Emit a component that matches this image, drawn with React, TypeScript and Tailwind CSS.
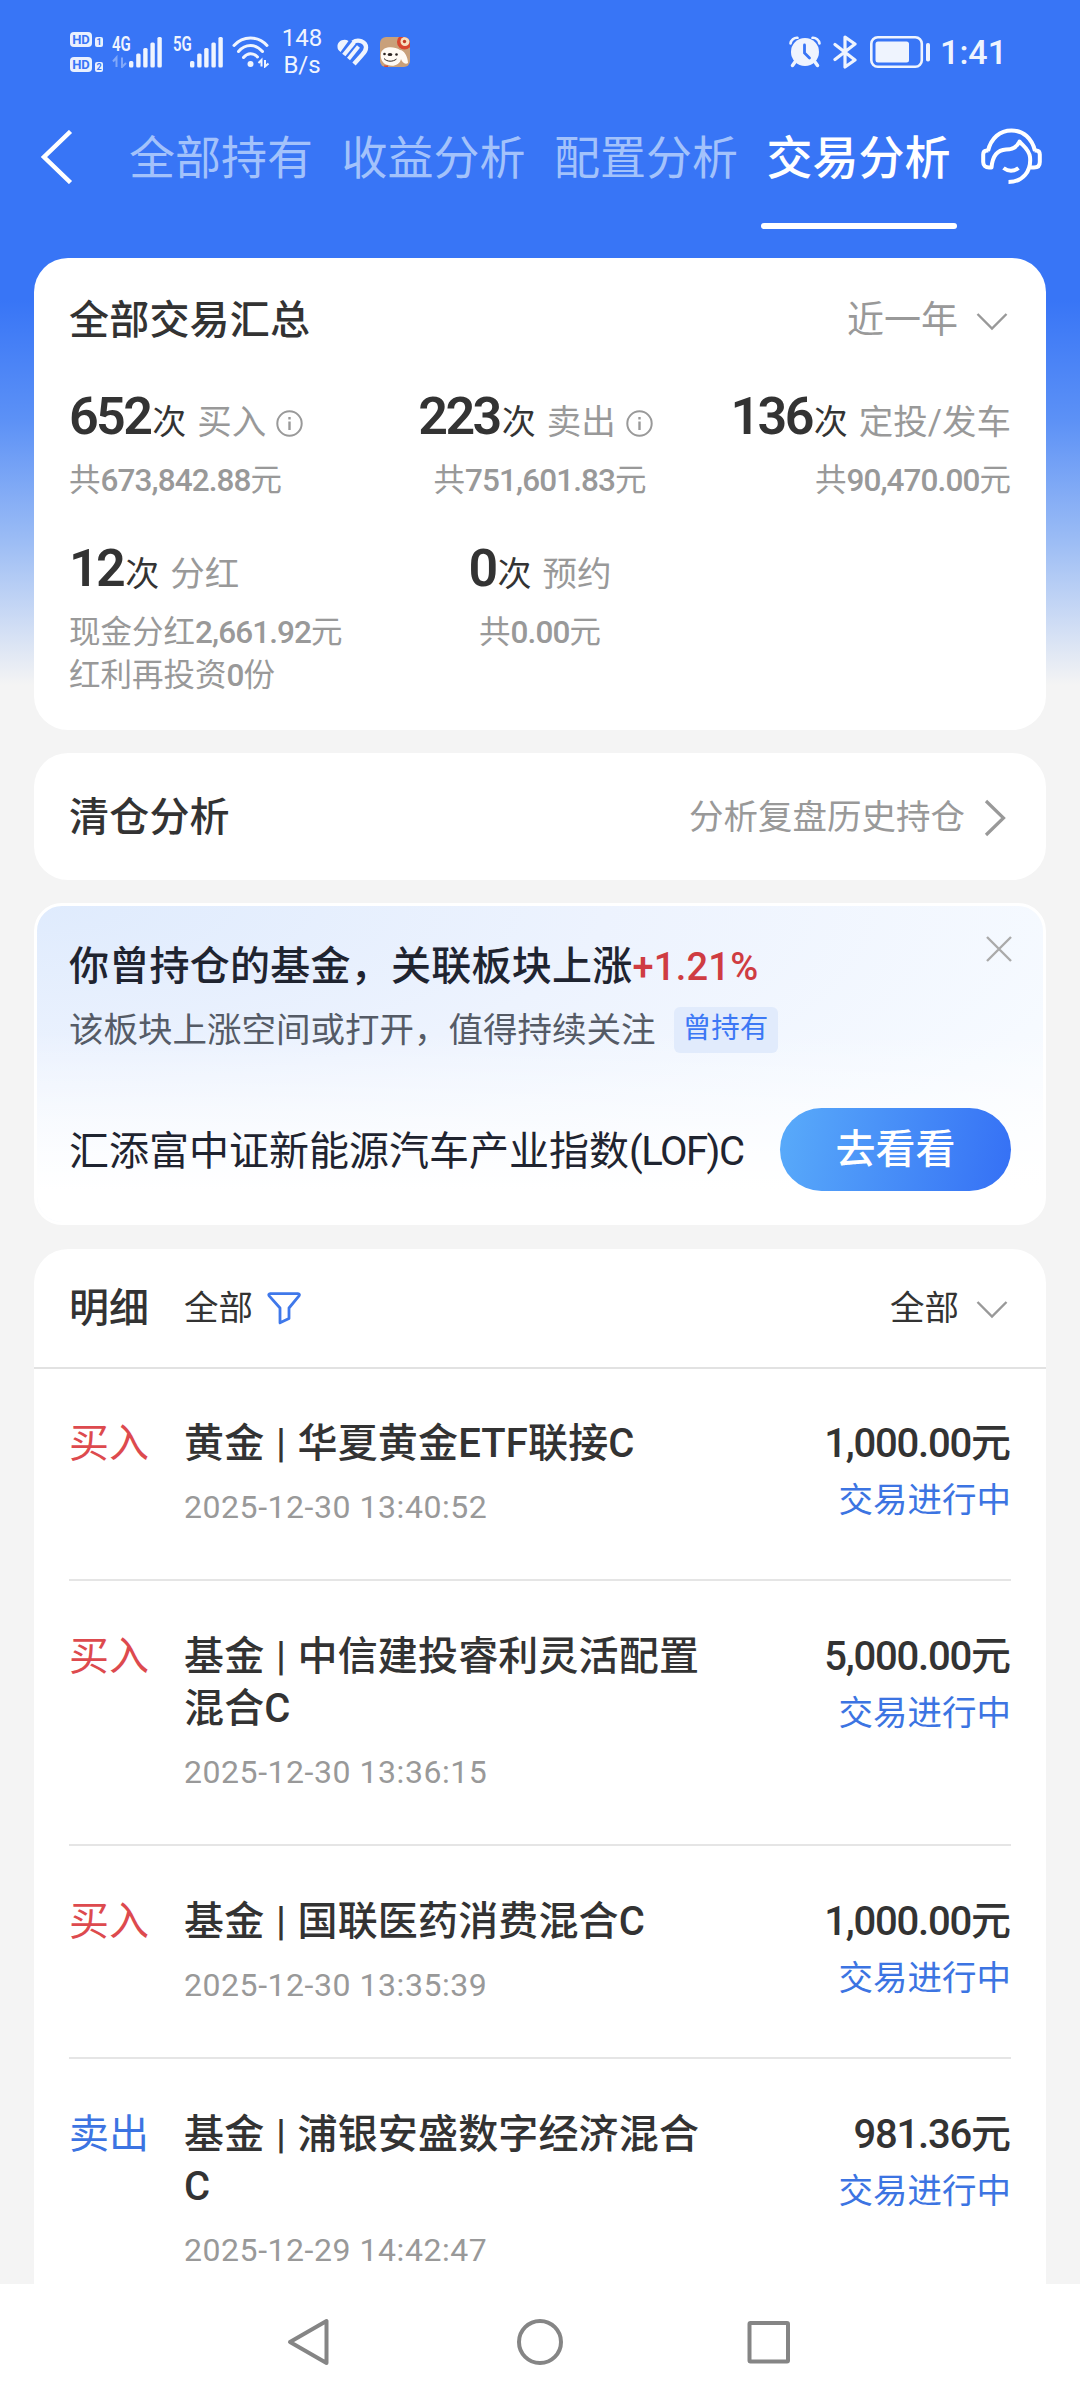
import React from 'react';

interface Stat {
  count: string;
  label: string;
  info?: boolean;
  lines: string[];
}

interface Trade {
  type: '买入' | '卖出';
  name: string[];
  time: string;
  amount: string;
}

const tabs = ['全部持有', '收益分析', '配置分析', '交易分析'];

const statRows: Stat[][] = [
  [
    { count: '652', label: '买入', info: true, lines: ['共673,842.88元'] },
    { count: '223', label: '卖出', info: true, lines: ['共751,601.83元'] },
    { count: '136', label: '定投/发车', lines: ['共90,470.00元'] },
  ],
  [
    { count: '12', label: '分红', lines: ['现金分红2,661.92元', '红利再投资0份'] },
    { count: '0', label: '预约', lines: ['共0.00元'] },
  ],
];

const trades: Trade[] = [
  { type: '买入', name: ['黄金 | 华夏黄金ETF联接C'], time: '2025-12-30 13:40:52', amount: '1,000.00' },
  { type: '买入', name: ['基金 | 中信建投睿利灵活配置', '混合C'], time: '2025-12-30 13:36:15', amount: '5,000.00' },
  { type: '买入', name: ['基金 | 国联医药消费混合C'], time: '2025-12-30 13:35:39', amount: '1,000.00' },
  { type: '卖出', name: ['基金 | 浦银安盛数字经济混合', 'C'], time: '2025-12-29 14:42:47', amount: '981.36' },
];

const HdBadge = ({ sim }: { sim: string }) => (
  <div className="flex items-end gap-[3px]">
    <span className="flex h-[15px] w-[22px] items-center justify-center rounded-[4px] bg-[#e9f0fe] text-[13px] leading-none font-bold text-[#3875f6]">HD</span>
    <span className="flex h-[10px] w-[8px] items-center justify-center rounded-[2px] bg-[#e9f0fe] text-[9px] leading-none font-bold text-[#3875f6]">{sim}</span>
  </div>
);

const SignalBars = ({ network, arrows }: { network: string; arrows?: boolean }) => (
  <div className="relative h-[32px] w-[50px] text-[#eff4fe]">
    <span className="absolute top-0 left-0 origin-left scale-x-[.75] text-[20px] leading-[16px] font-semibold">{network}</span>
    <svg className="absolute inset-0" width="50" height="32" viewBox="0 0 50 32" fill="currentColor">
      <rect x="17" y="25" width="4.4" height="6.5" rx="1.5" />
      <rect x="24.2" y="17.5" width="4.4" height="14" rx="1.5" />
      <rect x="31.2" y="12" width="4.4" height="19.5" rx="1.5" />
      <rect x="38.4" y="6.5" width="4.4" height="25" rx="1.5" />
      <rect x="45.4" y="1" width="4.4" height="30.5" rx="1.5" />
      {arrows && <path d="M4.5 31V21.5L1 25.5M10 21.5V31L14 27" fill="none" stroke="currentColor" strokeWidth="2" opacity=".4" />}
    </svg>
  </div>
);

const WifiIcon = () => (
  <svg width="38" height="32" viewBox="0 0 38 32" fill="none" stroke="#eff4fe" strokeWidth="3" strokeLinecap="round">
    <path d="M2 9.5C11-.5 26-.5 35 9.5" />
    <path d="M6.5 15.5C13.5 7.5 23.5 7.5 30.5 15.5" />
    <path d="M11.5 21.5C15.5 16.5 21.5 16.5 25.5 21" />
    <circle cx="18.5" cy="28" r="3" fill="#eff4fe" stroke="none" />
    <path d="M29.5 30.5V24L26.5 27M33 24V30.5L36.5 27.5" strokeWidth="2" strokeLinecap="butt" />
  </svg>
);

const HeartIcon = () => (
  <svg width="32" height="28" viewBox="0 0 32 28" fill="none" stroke="#eff4fe">
    <path d="M.5 9C0 3 7 0 11.5 3L3.5 14C1.500 12.5 .5 11 .5 9Z" fill="#eff4fe" stroke="none" />
    <path d="M6.8 17L17 4.5" strokeWidth="4.2" />
    <path d="M11.5 21L21.5 8.5" strokeWidth="3.8" />
    <path d="M15.8 4.5C21 .5 29 3.5 29 9.5C29 13 27 15 25 17L17 26" strokeWidth="4.4" />
  </svg>
);

const DogIcon = () => (
  <svg width="30" height="30" viewBox="0 0 30 30">
    <defs>
      <clipPath id="dog">
        <rect width="30" height="30" rx="6" />
      </clipPath>
    </defs>
    <g clipPath="url(#dog)">
      <rect width="30" height="30" fill="#c9a07a" />
      <circle cx="24.5" cy="5" r="7.5" fill="#d8452f" />
      <circle cx="25" cy="4.5" r="4.5" fill="#f8dfc0" />
      <circle cx="24.5" cy="4.5" r="1.7" fill="#c23a25" />
      <path d="M1 16C3 9 14 9 20 13C24 13 28 20 28 26C25 28 22 25 21 22C20 28 13 30 8 28C2 27 0 21 1 16Z" fill="#fffaf4" />
      <circle cx="4.5" cy="17" r="1.3" fill="#2b2320" />
      <circle cx="16.5" cy="17.5" r="1.3" fill="#2b2320" />
      <ellipse cx="10" cy="17.5" rx="2.4" ry="1.5" fill="#2b2320" />
      <path d="M4 21.5C7 25 13 25 16.5 22" fill="none" stroke="#2b2320" strokeWidth="1" />
      <path d="M4 28.5H8V30H4Z" fill="#d8452f" />
    </g>
  </svg>
);

const AlarmIcon = () => (
  <svg width="32" height="32" viewBox="0 0 32 32" fill="none" stroke="#eff4fe" strokeLinecap="round">
    <circle cx="16" cy="16" r="14" fill="#eff4fe" stroke="none" />
    <path d="M1.5 7.5C2 4 5 1.5 8.5 1.8M30.5 7.5C30 4 27 1.5 23.5 1.8" strokeWidth="2.6" />
    <path d="M6 26L3.5 29.5M26 26L28.5 29.5" strokeWidth="3.5" />
    <path d="M15.5 9V17L20.5 22" stroke="#3875f6" strokeWidth="2.8" />
  </svg>
);

const BluetoothIcon = () => (
  <svg width="24" height="34" viewBox="0 0 24 34" fill="none" stroke="#eff4fe" strokeWidth="3.2" strokeLinecap="round" strokeLinejoin="round">
    <path d="M2 9.5L22 25L12 32V2L22 9L2 24.5" />
  </svg>
);

const BatteryIcon = () => (
  <svg width="61" height="33" viewBox="0 0 61 33">
    <rect x="1.3" y="1.3" width="50.5" height="29.5" rx="6.5" fill="none" stroke="#eff4fe" strokeWidth="2.6" />
    <rect x="5.5" y="5.5" width="33.5" height="21" rx="2.5" fill="#eff4fe" />
    <rect x="56" y="7" width="4" height="18.5" rx="1.8" fill="#eff4fe" />
  </svg>
);

const HeadsetIcon = () => (
  <svg width="61" height="57" viewBox="0 0 61 57" fill="none" stroke="#fff" strokeWidth="4" strokeLinejoin="round">
    <path d="M7 23C10 10 19 2.5 30.5 2.5C42 2.5 51 10 54 23" />
    <path d="M7.5 22.5H6C3.5 22.5 2.2 24 2.2 26.5V34C2.2 37.5 4.5 39.5 8 39.5H10.5C11.5 28 16 22 25 21.5C31 21.5 36 19 38.5 13.5C42 18 48 21 49 29C50.5 43 42 54 27.5 54" />
    <path d="M53.5 22.5H55C57.5 22.5 58.8 24 58.8 26.5V34C58.8 37.5 57 39.5 53 39.5H49.5" />
    <path d="M22.5 40C27 43.5 33 43.5 37.5 40" />
  </svg>
);

const ChevronDown = () => (
  <svg width="32" height="19" viewBox="0 0 32 19" fill="none" stroke="#999" strokeWidth="2.4">
    <path d="M1.5 2L16 16.5L30.5 2" />
  </svg>
);

const InfoIcon = () => (
  <svg width="27" height="27" viewBox="0 0 27 27" fill="none" stroke="#999">
    <circle cx="13.5" cy="13.5" r="12.2" strokeWidth="2" />
    <path d="M13.5 11.5V20M13.5 7V9.4" strokeWidth="2.4" />
  </svg>
);

const FunnelIcon = () => (
  <svg width="34" height="34" viewBox="0 0 34 34" fill="none" stroke="#3f78ea" strokeWidth="2.8" strokeLinejoin="round">
    <path d="M3.2 2.6H31C32.3 2.6 32.8 3.8 32 4.9L22 17V27.5L13 31.8V17L2.2 4.9C1.4 3.8 1.9 2.6 3.2 2.6Z" />
  </svg>
);

const StatusBar = () => (
  <div className="flex h-[104px] items-center pr-[73px] pl-[70px]">
    <div className="flex flex-col gap-[10px]">
      <HdBadge sim="1" />
      <HdBadge sim="2" />
    </div>
    <div className="ml-[9px]">
      <SignalBars network="4G" arrows />
    </div>
    <div className="ml-[11px]">
      <SignalBars network="5G" />
    </div>
    <div className="ml-[9px]">
      <WifiIcon />
    </div>
    <div className="ml-[10px] w-[44px] text-center text-[24px] leading-[27px] text-[#eff4fe]">
      <div>148</div>
      <div>B/s</div>
    </div>
    <div className="ml-[13px]">
      <HeartIcon />
    </div>
    <div className="ml-[11px]">
      <DogIcon />
    </div>
    <div className="ml-auto flex items-center">
      <AlarmIcon />
      <div className="ml-[12px]">
        <BluetoothIcon />
      </div>
      <div className="ml-[13px]">
        <BatteryIcon />
      </div>
      <span className="ml-[9px] text-[34px] leading-none font-medium text-[#eff4fe]">1:41</span>
    </div>
  </div>
);

// Figures are set heavier than the characters around them
const StatLine = ({ text }: { text: string }) => (
  <div className="whitespace-nowrap">
    {text.split(/([\d,.]+)/).map((part, i) =>
      i % 2 === 1 ? (
        <span key={i} className="font-medium tracking-[-0.9px]">{part}</span>
      ) : (
        part
      )
    )}
  </div>
);

const StatItem = ({ stat, column }: { stat: Stat; column: number }) => (
  <div className={column === 0 ? 'flex flex-col items-start' : column === 1 ? 'flex flex-col items-center' : 'flex flex-col items-end'}>
    <div className={stat.info ? 'mr-[9px] flex h-[60px] items-baseline whitespace-nowrap' : 'flex h-[60px] items-baseline whitespace-nowrap'}>
      <span className="text-[52px] leading-[60px] font-semibold tracking-[-2.6px] text-[#333]">{stat.count}</span>
      <span className="ml-[2px] text-[34px] text-[#333]">次</span>
      <span className="ml-[11px] text-[34.5px] text-[#999]">{stat.label}</span>
      {stat.info && (
        <span className="ml-[10px] translate-y-[3px]">
          <InfoIcon />
        </span>
      )}
    </div>
    <div className="mt-[12px] text-[31.5px] leading-[43px] text-[#999]">
      {stat.lines.map((line) => (
        <StatLine key={line} text={line} />
      ))}
    </div>
  </div>
);

const TradeRow = ({ trade, last }: { trade: Trade; last: boolean }) => (
  <div className={last ? 'flex pt-[50px]' : 'flex border-b-2 border-[#e5e5e5] pt-[50px] pb-[49px]'}>
    <div className={trade.type === '买入' ? 'w-[115px] text-[40px] leading-[52px] text-[#dd4a4e]' : 'w-[115px] text-[40px] leading-[52px] text-[#3c74e2]'}>
      {trade.type}
    </div>
    <div className="flex-1 whitespace-nowrap">
      <div className="text-[40px] leading-[52px] font-medium tracking-[.15px] text-[#333] [word-spacing:1.5px]">
        {trade.name.map((line) => (
          <div key={line}>{line}</div>
        ))}
      </div>
      <div className="mt-[14px] text-[32px] leading-[46px] tracking-[.55px] text-[#999]">{trade.time}</div>
    </div>
    <div className="text-right whitespace-nowrap">
      <div className="text-[40px] leading-[52px] font-medium text-[#333]">
        <span className="tracking-[-1.2px]">{trade.amount}</span>元
      </div>
      <div className="mt-[6px] text-[34.5px] leading-[48px] text-[#3c74e2]">交易进行中</div>
    </div>
  </div>
);

const App: React.FC = () => {
  return (
    <div className="flex h-[2400px] w-[1080px] flex-col overflow-hidden bg-[#f4f4f4] font-[Roboto,'Noto_Sans_CJK_SC',sans-serif]">
      <main className="h-[2284px] overflow-hidden bg-[linear-gradient(180deg,#3875f6_0px,#3875f6_300px,#5c91f6_420px,#9bbcf5_540px,#f4f4f4_685px)]">
        <StatusBar />

        {/* Tab bar */}
        <nav className="flex h-[154px] items-start">
          <svg className="mt-[26px] ml-[40px] shrink-0" width="34" height="54" viewBox="0 0 34 54" fill="none" stroke="#fff" strokeWidth="4.5">
            <path d="M30.5 1.5L4 27L30.5 52.5" />
          </svg>
          <div className="ml-[55px] flex gap-[28.5px] whitespace-nowrap">
            {tabs.map((tab, i) => (
              <div key={tab} className="flex w-[184px] flex-col items-center">
                <span className={i === 3 ? 'mt-[21px] text-[46px] leading-[66px] font-medium text-white' : 'mt-[21px] text-[46px] leading-[66px] text-[#a3c2fb]'}>{tab}</span>
                {i === 3 && <span className="mt-[32px] h-[6px] w-[196px] rounded-full bg-white" />}
              </div>
            ))}
          </div>
          <div className="mt-[24px] ml-[30px] shrink-0">
            <HeadsetIcon />
          </div>
        </nav>

        <div className="flex flex-col px-[34px]">
          {/* Summary */}
          <section className="h-[472px] rounded-[34px] bg-white px-[35px] pt-[34px]">
            <div className="flex h-[58px] items-center justify-between">
              <h2 className="text-[40px] leading-[58px] font-medium tracking-[.2px] text-[#333]">全部交易汇总</h2>
              <div className="flex items-center gap-[18px] pr-[3px] text-[37px] leading-[58px] text-[#999]">
                近一年
                <ChevronDown />
              </div>
            </div>
            {statRows.map((row, i) => (
              <div key={i} className={i === 0 ? 'mt-[37px] grid h-[152px] grid-cols-3' : 'grid grid-cols-3'}>
                {row.map((stat, column) => (
                  <StatItem key={stat.label} stat={stat} column={column} />
                ))}
              </div>
            ))}
          </section>

          {/* Closed positions */}
          <section className="mt-[23px] flex h-[127px] items-center justify-between rounded-[34px] bg-white px-[35px] pt-[2px]">
            <h2 className="text-[40px] font-medium tracking-[.2px] text-[#333]">清仓分析</h2>
            <div className="flex items-center gap-[18px] pr-[4px] text-[34.5px] text-[#999]">
              分析复盘历史持仓
              <svg width="24" height="38" viewBox="0 0 24 38" fill="none" stroke="#999" strokeWidth="3.2">
                <path d="M3 2L20.5 19L3 36" />
              </svg>
            </div>
          </section>

          {/* Promoted fund */}
          <section className="relative mt-[23px] h-[322px] rounded-[28px] border-[3px] border-white bg-[radial-gradient(ellipse_at_0%_0%,#dfebfd_0%,#edf3fe_40%,#f6faff_75%,#ffffff_100%)] px-[32px] pt-[33px]">
            <div className="absolute inset-0 rounded-[25px] bg-[linear-gradient(180deg,rgba(255,255,255,0)_40%,#ffffff_90%)]" />
            <svg className="absolute top-[29px] right-[30px]" width="28" height="28" viewBox="0 0 28 28" stroke="#aaa" strokeWidth="2.4">
              <path d="M2 2L26 26M26 2L2 26" />
            </svg>
            <div className="relative">
              <h3 className="text-[40px] leading-[56px] font-medium tracking-[.25px] whitespace-nowrap text-[#1f2430]">
                你曾持仓的基金，关联板块上涨<span className="text-[38px] text-[#cf3c42]">+1.21%</span>
              </h3>
              <div className="mt-[10px] flex items-center gap-[18px] whitespace-nowrap">
                <span className="text-[34.5px] leading-[50px] text-[#555b66]">该板块上涨空间或打开，值得持续关注</span>
                <span className="flex h-[46px] w-[104px] items-center justify-center rounded-[6px] bg-[#e1ebfc] pb-[2px] text-[28.5px] text-[#3c78f5]">曾持有</span>
              </div>
              <div className="mt-[53px] flex items-center justify-between">
                <span className="translate-y-[2px] text-[40px] leading-[58px] whitespace-nowrap text-[#1f2430]">
                  汇添富中证新能源汽车产业指数<span className="tracking-[-1.5px]">(LOF)C</span>
                </span>
                <button className="h-[83px] w-[231px] rounded-full bg-[linear-gradient(100deg,#59abfa,#3570f5)] pt-[1px] text-[40px] font-medium text-white">去看看</button>
              </div>
            </div>
          </section>

          {/* Trade details */}
          <section className="mt-[24px] h-[1040px] rounded-t-[34px] bg-white">
            <div className="flex h-[120px] items-center border-b-2 border-[#e2e2e2] px-[35px] pt-[2px]">
              <h2 className="text-[40px] font-medium text-[#333]">明细</h2>
              <span className="mr-[14px] ml-[35px] text-[34.5px] text-[#333]">全部</span>
              <div className="mb-[3px]">
                <FunnelIcon />
              </div>
              <div className="ml-auto flex items-center gap-[17px] pr-[3px] text-[34.5px] text-[#333]">
                全部
                <ChevronDown />
              </div>
            </div>
            <div className="-mt-[1px] px-[35px]">
              {trades.map((trade, i) => (
                <TradeRow key={trade.time} trade={trade} last={i === trades.length - 1} />
              ))}
            </div>
          </section>
        </div>
      </main>

      {/* System navigation */}
      <footer className="flex h-[116px] items-center bg-white pl-[286px]">
        <svg width="506" height="50" viewBox="0 0 506 50" fill="none" stroke="#858585" strokeWidth="4" strokeLinejoin="round">
          <path d="M40.5 4V46L4 25Z" />
          <circle cx="254" cy="25" r="21" />
          <rect x="463.500" y="6" width="38.500" height="38.500" rx="1" />
        </svg>
      </footer>
    </div>
  );
};

export default App;
